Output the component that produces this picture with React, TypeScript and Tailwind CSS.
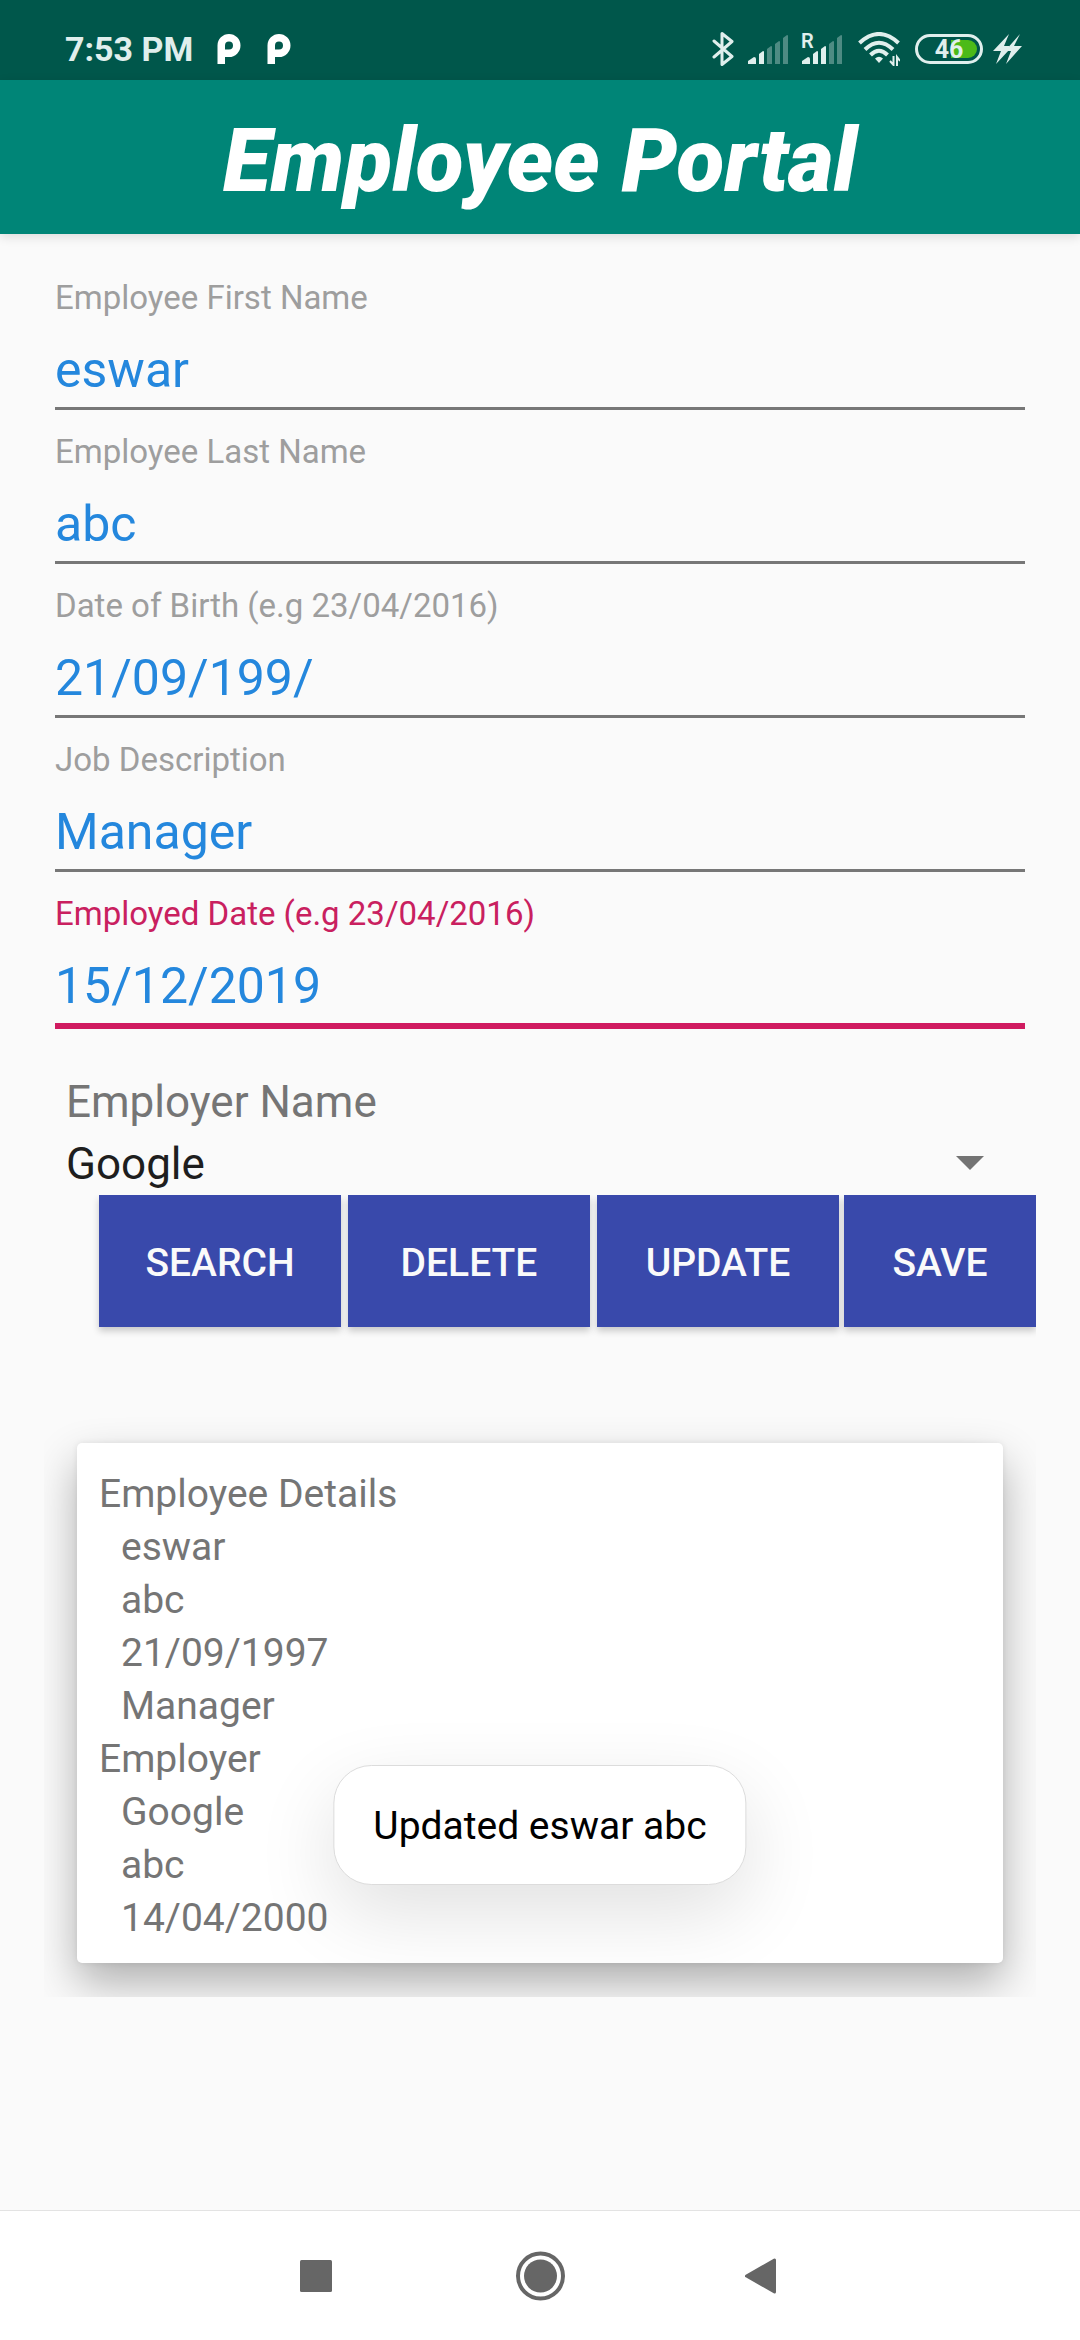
import { useState } from "react";

type FieldProps = { id: string; label: string; initial: string; active?: boolean };

function Field({ id, label, initial, active }: FieldProps) {
  const [value, setValue] = useState(initial);
  return (
    <div className="flex h-[154px] flex-col px-[11px]">
      <label
        htmlFor={id}
        className={
          active
            ? "pt-[22px] text-[33px] leading-[40px] text-[#c9205f]"
            : "pt-[22px] text-[33px] leading-[40px] text-[#9e9e9e]"
        }
      >
        {label}
      </label>
      <input
        id={id}
        type="text"
        value={value}
        onChange={(e) => setValue(e.target.value)}
        className={
          active
            ? "mt-[21px] h-[74px] w-full shrink-0 border-b-6 border-[#d01b60] bg-transparent pb-[6px] text-[50px] leading-[60px] text-[#2487dd] outline-none"
            : "mt-[21px] h-[71px] w-full shrink-0 border-b-3 border-[#777777] bg-transparent pb-[6px] text-[50px] leading-[60px] text-[#2487dd] outline-none"
        }
      />
    </div>
  );
}

function ParkingIcon() {
  return (
    <svg viewBox="0 0 24 30" className="h-[30px] w-[24px]" fill="#fff" aria-hidden="true">
      <path
        fillRule="evenodd"
        d="M.5 30V11.500a11.500 11.500 0 1 1 11.500 11.500H8V30zM8 15.500h4a4 4 0 1 0-4-4z"
      />
    </svg>
  );
}

function BluetoothIcon() {
  return (
    <svg viewBox="0 0 22 36" className="h-[36px] w-[22px]" fill="none" aria-hidden="true">
      <path d="M2 10l18 15.500-10 8V2.500L20 10.500 2 26" stroke="#e0efed" strokeWidth="3" strokeLinejoin="round" strokeLinecap="round" />
    </svg>
  );
}

function SignalIcon({ level, roaming }: { level: number; roaming?: boolean }) {
  const bars = [
    "M0 30v-3l6-4q2 0 2 2v5z",
    "M11 30V20l4-3q1 0 1 1v12z",
    "M19 30V15l4-3q1 0 1 1v17z",
    "M27 30V10l4-3q1 0 1 1v22z",
    "M35 30V4l4-3q1 0 1 1v28z",
  ];
  return (
    <svg viewBox="-2 -8 45 46" className="h-[46px] w-[45px] overflow-visible" aria-hidden="true">
      {bars.map((d, i) => (
        <path key={d} d={d} fill="#e0efed" fillOpacity={i < level ? 1 : 0.35} />
      ))}
      {roaming && (
        <text x="-1" y="14" fontSize="20" fontWeight="600" fontFamily="Roboto" fill="#e0efed">
          R
        </text>
      )}
    </svg>
  );
}

function WifiIcon() {
  return (
    <svg viewBox="0 0 42 34" className="h-[34px] w-[42px]" fill="none" aria-hidden="true">
      <g stroke="#e0efed" strokeWidth="4">
        <path d="M1.500 11Q21-7 40.500 11" />
        <path d="M7 17.500Q21 4 35 17.500" />
        <path d="M12.500 23Q21 14.500 29.500 23" />
      </g>
      <path d="M17 26.500Q21 23 25 26.500L21 31z" fill="#e0efed" />
      <path d="M35.500 24v9l-3.500-4M39 34v-9l3 4" stroke="#e0efed" strokeWidth="2" />
    </svg>
  );
}

function BatteryIcon() {
  return (
    <svg viewBox="0 0 68 30" className="h-[30px] w-[68px]" fill="none" aria-hidden="true">
      <rect x="1.500" y="1.500" width="65" height="27" rx="13.500" stroke="#e0efed" strokeWidth="3" />
      <path d="M36 6h17a9 9 0 0 1 0 18H36z" fill="#4cba18" />
      <text x="34" y="24" textAnchor="middle" fontSize="25" fontWeight="700" fontFamily="Roboto" fill="#e0efed">
        46
      </text>
    </svg>
  );
}

function ChargeIcon() {
  return (
    <svg viewBox="0 0 29 30" className="h-[30px] w-[29px]" fill="#e0efed" aria-hidden="true">
      <path d="M16 0L0 17h8L3 30l13-14v-4h-5z" />
      <path d="M27 0L12 17h6l-5 13 16-18h-8z" />
    </svg>
  );
}

function StatusBar() {
  return (
    <div className="flex h-[80px] items-center justify-between bg-[#00574b] pr-[58px] pl-[65px] pt-[18px]">
      <div className="flex items-center">
        <span className="text-[34px] leading-[40px] font-bold text-[#e0efed]">7:53 PM</span>
        <div className="flex gap-[26px] pl-[24px]">
          <ParkingIcon />
          <ParkingIcon />
        </div>
      </div>
      <div className="flex items-center">
        <BluetoothIcon />
        <div className="flex gap-[9px] pl-[12px]">
          <SignalIcon level={2} />
          <SignalIcon level={3} roaming />
        </div>
        <div className="flex items-center gap-[15px] pl-[13px]">
          <WifiIcon />
          <div className="flex gap-[10px]">
            <BatteryIcon />
            <ChargeIcon />
          </div>
        </div>
      </div>
    </div>
  );
}

const buttonClass =
  "h-[132px] bg-[#3949ab] pt-[3px] text-[39px] leading-[46px] font-medium text-[#fafafa] shadow-[0_4px_7px_rgba(0,0,0,0.2)]";

function Actions() {
  return (
    <div className="flex overflow-hidden pb-[12px] pl-[55px]">
      <div className="flex flex-[740] gap-[7px]">
        <button type="button" className={`flex-1 ${buttonClass}`}>SEARCH</button>
        <button type="button" className={`flex-1 ${buttonClass}`}>DELETE</button>
        <button type="button" className={`flex-1 ${buttonClass}`}>UPDATE</button>
      </div>
      <button type="button" className={`ml-[5px] flex-[192] ${buttonClass}`}>SAVE</button>
    </div>
  );
}

function Details() {
  return (
    <div className="mt-[72px] overflow-hidden px-[33px] pt-[32px] pb-[34px]">
      <section className="rounded-[5px] bg-white px-[22px] pt-[25px] pb-[18px] text-[39px] leading-[53px] text-[#757575] shadow-[0_20px_44px_rgba(0,0,0,0.3),0_0_6px_rgba(0,0,0,0.08)]">
        <h2>Employee Details</h2>
        <ul className="pl-[22px]">
          <li>eswar</li>
          <li>abc</li>
          <li>21/09/1997</li>
          <li>Manager</li>
        </ul>
        <h2>Employer</h2>
        <ul className="pl-[22px]">
          <li>Google</li>
          <li>abc</li>
          <li>14/04/2000</li>
        </ul>
      </section>
    </div>
  );
}

function NavBar() {
  return (
    <nav className="mt-auto flex h-[130px] items-center justify-center gap-[168px] border-t border-[#e3e3e3] bg-white">
      <button type="button" aria-label="Recent apps">
        <svg viewBox="0 0 54 54" className="size-[54px]" fill="#666">
          <rect x="9" y="11" width="32" height="32" rx="1.500" />
        </svg>
      </button>
      <button type="button" aria-label="Home">
        <svg viewBox="0 0 54 54" className="size-[54px]" fill="#666">
          <circle cx="27.500" cy="27" r="22.500" fill="none" stroke="#666" strokeWidth="4" />
          <circle cx="27.500" cy="27" r="16.500" />
        </svg>
      </button>
      <button type="button" aria-label="Back">
        <svg viewBox="0 0 54 54" className="size-[54px]" fill="#666" stroke="#666" strokeWidth="3" strokeLinejoin="round">
          <path d="M11.500 27L39.500 11v32z" />
        </svg>
      </button>
    </nav>
  );
}

export default function App() {
  return (
    <div className="relative flex min-h-screen flex-col bg-[#fafafa] font-['Roboto',sans-serif]">
      <StatusBar />
      <header className="flex h-[154px] items-center justify-center bg-[#008577] pt-[8px] shadow-[0_3px_10px_rgba(0,0,0,0.12)]">
        <h1 className="text-[88px] leading-[104px] font-black text-white italic">Employee Portal</h1>
      </header>
      <main className="flex flex-col px-[44px] pt-[22px]">
        <Field id="first" label="Employee First Name" initial="eswar" />
        <Field id="last" label="Employee Last Name" initial="abc" />
        <Field id="birth" label="Date of Birth (e.g 23/04/2016)" initial="21/09/199/" />
        <Field id="job" label="Job Description" initial="Manager" />
        <Field id="employed" label="Employed Date (e.g 23/04/2016)" initial="15/12/2019" active />
        <div className="flex flex-col px-[22px] pt-[46px]">
          <label htmlFor="employer" className="text-[44px] leading-[60px] text-[#757575]">
            Employer Name
          </label>
          <div className="relative">
            <select
              id="employer"
              defaultValue="Google"
              className="h-[63px] w-full appearance-none bg-transparent text-[44px] leading-[60px] text-[#1e1e1e] outline-none"
            >
              <option>Google</option>
            </select>
            <svg viewBox="0 0 28 14" className="pointer-events-none absolute top-[24px] right-[30px] h-[14px] w-[28px]" fill="#737373" aria-hidden="true">
              <path d="M0 0h28L14 14z" />
            </svg>
          </div>
        </div>
        <Actions />
        <Details />
      </main>
      <NavBar />
      <div
        role="status"
        className="absolute bottom-[455px] left-1/2 -translate-x-1/2 rounded-[38px] border border-[#dcdcdc] bg-white px-[39px] pt-[37px] pb-[35px] text-[39px] leading-[46px] whitespace-nowrap text-black shadow-[0_28px_80px_rgba(0,0,0,0.12)]"
      >
        Updated eswar abc
      </div>
    </div>
  );
}
